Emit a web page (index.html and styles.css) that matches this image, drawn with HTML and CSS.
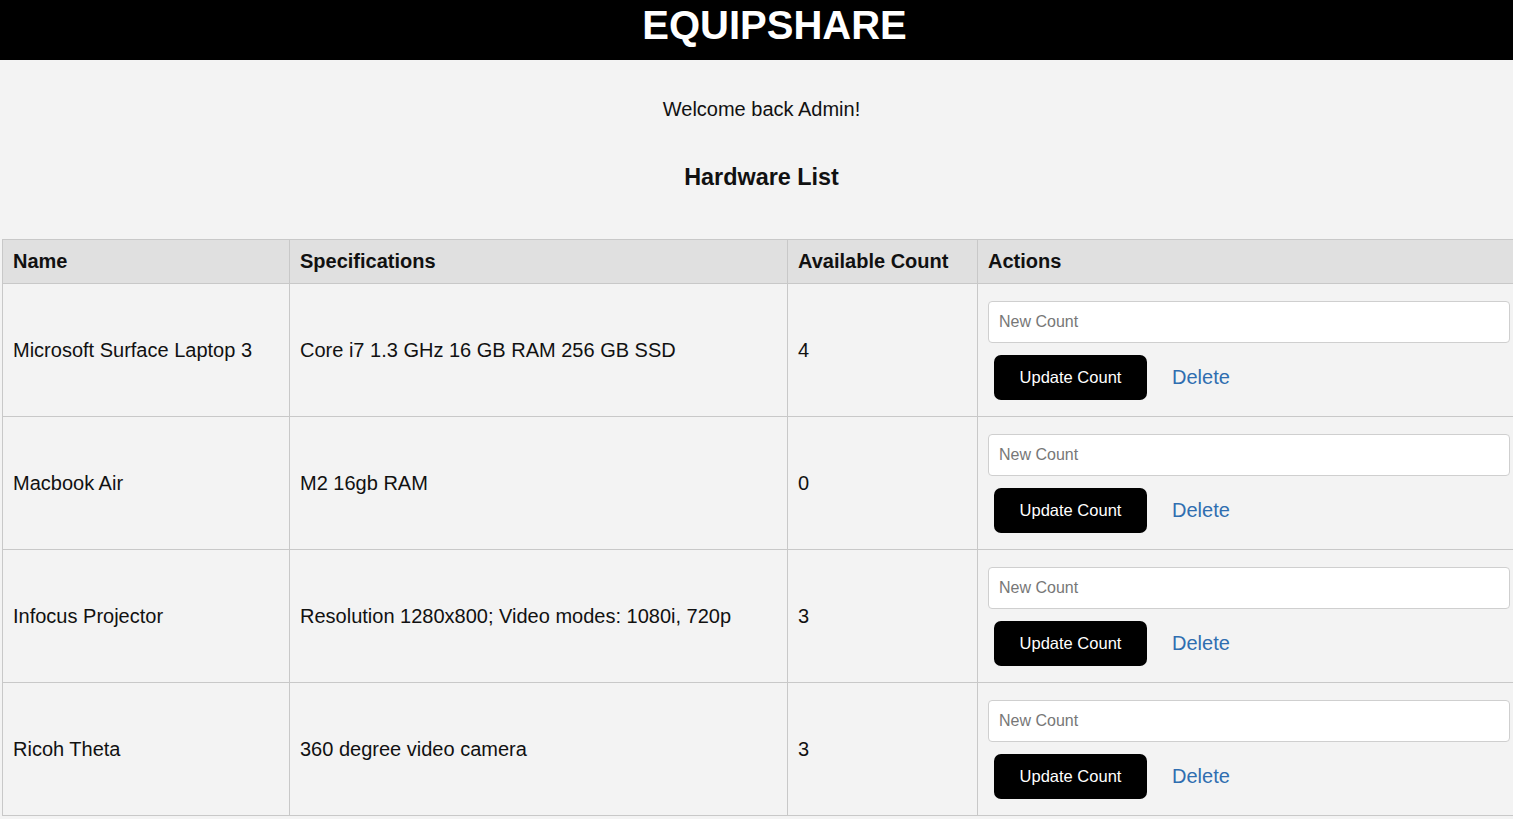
FILE: index.html
```html
<!DOCTYPE html>
<html lang="en">
<head>
<meta charset="utf-8">
<title>EquipShare</title>
<link rel="stylesheet" href="styles.css">
</head>
<body>
<div class="page">
  <header class="topbar"><h1 class="brand">EQUIPSHARE</h1></header>
  <p class="welcome">Welcome back Admin!</p>
  <h3 class="list-title">Hardware List</h3>
  <table class="hw">
    <thead>
      <tr><th class="c-name">Name</th><th class="c-spec">Specifications</th><th class="c-count">Available Count</th><th class="c-act">Actions</th></tr>
    </thead>
    <tbody>
      <tr>
        <td>Microsoft Surface Laptop 3</td><td>Core i7 1.3 GHz 16 GB RAM 256 GB SSD</td><td>4</td>
        <td class="actions"><input class="count-input" type="number" placeholder="New Count"><div class="btn-row"><button class="btn">Update Count</button><a class="del" href="#">Delete</a></div></td>
      </tr>
      <tr>
        <td>Macbook Air</td><td>M2 16gb RAM</td><td>0</td>
        <td class="actions"><input class="count-input" type="number" placeholder="New Count"><div class="btn-row"><button class="btn">Update Count</button><a class="del" href="#">Delete</a></div></td>
      </tr>
      <tr>
        <td>Infocus Projector</td><td>Resolution 1280x800; Video modes: 1080i, 720p</td><td>3</td>
        <td class="actions"><input class="count-input" type="number" placeholder="New Count"><div class="btn-row"><button class="btn">Update Count</button><a class="del" href="#">Delete</a></div></td>
      </tr>
      <tr>
        <td>Ricoh Theta</td><td>360 degree video camera</td><td>3</td>
        <td class="actions"><input class="count-input" type="number" placeholder="New Count"><div class="btn-row"><button class="btn">Update Count</button><a class="del" href="#">Delete</a></div></td>
      </tr>
    </tbody>
  </table>
</div>
</body>
</html>
```
FILE: styles.css
```css
html, body {
  margin: 0;
  padding: 0;
  background: #f3f3f3;
  overflow: hidden;
}
body {
  font-family: "Liberation Sans", Arial, sans-serif;
  font-size: 20px;
  color: #111;
}
.page {
  width: 1513px;
  height: 819px;
  overflow: hidden;
}
.topbar {
  background: #000;
  height: 60px;
  display: flex;
  align-items: center;
  justify-content: center;
  padding-left: 36px;
}
.brand {
  margin: 0;
  color: #fff;
  font-size: 40px;
  font-weight: bold;
  line-height: 46px;
  margin-top: -10px;
}
.welcome {
  margin: 38px 0 0 10px;
  text-align: center;
  line-height: 23px;
}
.list-title {
  margin: 43px 0 0 10px;
  text-align: center;
  font-size: 23.4px;
  line-height: 27px;
  font-weight: bold;
}
.hw {
  margin: 48px 0 0 2px;
  border-collapse: collapse;
  width: 1518px;
  table-layout: fixed;
}
.c-name { width: 266px; }
.c-spec { width: 477px; }
.c-count { width: 169px; }
.c-act { width: 522px; }
.hw th, .hw td {
  border: 1px solid #c8c8c8;
  padding: 10px;
  text-align: left;
  vertical-align: middle;
  line-height: 23px;
}
.hw th {
  background: #e0e0e0;
  font-weight: bold;
}
.hw td.actions {
  padding-top: 17px;
  padding-bottom: 16px;
}
.count-input {
  display: block;
  box-sizing: border-box;
  width: 522px;
  height: 42px;
  margin: 0;
  padding: 0 10px;
  border: 1px solid #cfcfcf;
  border-radius: 4px;
  background: #fff;
  font-family: "Liberation Sans", Arial, sans-serif;
  font-size: 16px;
  color: #333;
}
.count-input::placeholder {
  color: #777;
}
.btn-row {
  display: flex;
  align-items: center;
  margin-top: 12px;
  padding-left: 6px;
  gap: 25px;
}
.btn {
  width: 153px;
  height: 45px;
  background: #000;
  color: #fff;
  border: none;
  border-radius: 7px;
  font-family: "Liberation Sans", Arial, sans-serif;
  font-size: 16.5px;
  padding: 0;
}
.del {
  color: #2f6eb0;
  text-decoration: none;
  font-size: 20px;
  line-height: 23px;
}
```
